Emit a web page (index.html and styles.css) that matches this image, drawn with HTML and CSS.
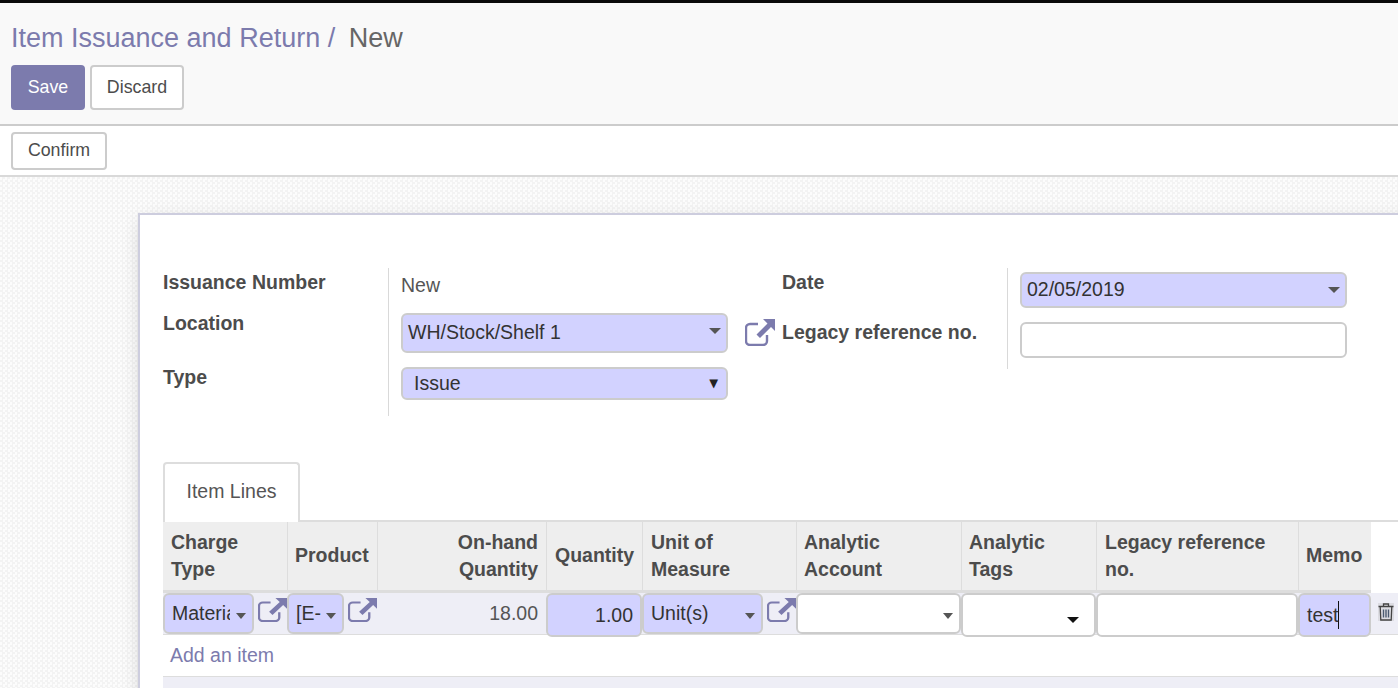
FILE: index.html
```html
<!DOCTYPE html>
<html lang="en">
<head>
<meta charset="utf-8">
<title>Item Issuance and Return</title>
<link rel="stylesheet" href="styles.css">
</head>
<body>
<svg class="defs" width="0" height="0" aria-hidden="true">
  <symbol id="ext" viewBox="0 0 30 27" preserveAspectRatio="none">
    <path d="M13 5H5A4 4 0 0 0 1 9v13a4 4 0 0 0 4 4h13a4 4 0 0 0 4-4v-6" fill="none" stroke="currentColor" stroke-width="2.400"/>
    <path d="M18 0h12v12l-4-4-11 11-3.500-3.500 11-11z" fill="currentColor"/>
  </symbol>
</svg>
<header class="control">
  <h1 class="crumbs"><span class="crumb-link">Item Issuance and Return</span><span class="crumb-sep"> / </span><span class="crumb-cur">New</span></h1>
  <div class="actions">
    <button class="btn btn-primary">Save</button>
    <button class="btn btn-plain">Discard</button>
  </div>
</header>
<div class="statusbar">
  <button class="btn btn-plain btn-confirm">Confirm</button>
</div>
<main class="bg">
  <section class="sheet">
    <div class="group">
      <div class="form-left">
        <div class="label l1">Issuance Number</div>
        <div class="val v1 plain">New</div>
        <div class="spacer"></div>
        <div class="label l2">Location</div>
        <div class="val v2"><div class="field req h40">WH/Stock/Shelf 1<i class="tri grey"></i></div></div>
        <div class="extcell"><svg class="ext big"><use href="#ext"/></svg></div>
        <div class="label l3">Type</div>
        <div class="val v3"><div class="field req h33 sel">Issue<span class="blk">▼</span></div></div>
        <div class="spacer"></div>
      </div>
      <div class="form-right">
        <div class="label r1">Date</div>
        <div class="val r2"><div class="field req h36 dt">02/05/2019<i class="tri grey"></i></div></div>
        <div class="label r3">Legacy reference no.</div>
        <div class="val r4"><div class="field h36 blank"></div></div>
      </div>
    </div>
    <div class="tabs"><div class="tab">Item Lines</div></div>
    <table class="lines">
      <colgroup>
        <col class="c1"><col class="c2"><col class="c3"><col class="c4"><col class="c5"><col class="c6"><col class="c7"><col class="c8"><col class="c9"><col class="c10">
      </colgroup>
      <thead>
        <tr>
          <th>Charge<br>Type</th>
          <th class="single">Product</th>
          <th class="num">On-hand<br>Quantity</th>
          <th class="single inset">Quantity</th>
          <th class="inset">Unit of<br>Measure</th>
          <th>Analytic<br>Account</th>
          <th>Analytic<br>Tags</th>
          <th class="inset">Legacy reference<br>no.</th>
          <th class="single">Memo</th>
          <th class="nohead"></th>
        </tr>
      </thead>
      <tbody>
        <tr class="row">
          <td><div class="cell"><div class="tf req w91"><span class="clip">Material</span><i class="tri grey"></i></div><svg class="ext"><use href="#ext"/></svg></div></td>
          <td><div class="cell"><div class="tf req w57"><span class="clip">[E-</span><i class="tri grey"></i></div><svg class="ext"><use href="#ext"/></svg></div></td>
          <td class="onhand">18.00</td>
          <td><div class="tf req tall qty">1.00</div></td>
          <td><div class="cell"><div class="tf req w121"><span class="clip">Unit(s)</span><i class="tri grey"></i></div><svg class="ext"><use href="#ext"/></svg></div></td>
          <td><div class="tf blankf"><i class="tri grey"></i></div></td>
          <td><div class="tf blankf tall tags"><i class="tri black"></i></div></td>
          <td><div class="tf blankf tall"></div></td>
          <td><div class="tf req tall memo"><span class="caret">test</span></div></td>
          <td class="del">
            <svg class="trash" viewBox="0 0 16 18"><path d="M5.500 3V1h5v2M0.500 3.500h15M2.200 3.500l.6 13.500h10.400l.6-13.500" fill="none" stroke="#444" stroke-width="1.300"/><path d="M5.500 6.500v8M8 6.500v8M10.500 6.500v8" fill="none" stroke="#4a5a70" stroke-width="1.400"/></svg>
          </td>
        </tr>
        <tr class="add"><td colspan="10"><span class="addlink">Add an item</span></td></tr>
        <tr class="foot"><td colspan="10"></td></tr>
      </tbody>
    </table>
  </section>
</main>
</body>
</html>
```
FILE: styles.css
```css
* { box-sizing: border-box; }
html, body { margin: 0; height: 688px; overflow: hidden; }
body {
  width: 1398px;
  font-family: "Liberation Sans", Arial, sans-serif;
  font-size: 19.500px;
  color: #4c4c4c;
  background: #fff;
}
.defs { position: absolute; }
.control {
  height: 126px;
  background: #f9f9f9;
  border-top: 3px solid #0a0a0a;
  border-bottom: 2px solid #ccc;
  padding: 19px 11px 0;
}
.crumbs { margin: 0; font-size: 27px; font-weight: 400; line-height: 33px; white-space: pre; }
.crumb-link { color: #7c7bad; }
.crumb-sep { color: #7c7bad; }
.crumb-cur { color: #666; margin-left: 6px; }
.actions { display: flex; gap: 5px; margin-top: 10px; }
.btn {
  font: inherit;
  font-size: 17.800px;
  border-radius: 4px;
  height: 45px;
  padding: 0;
  cursor: pointer;
}
.btn-primary { width: 74px; background: #7c7bad; color: #fff; border: 0; }
.btn-plain { width: 94px; background: #fff; color: #4c4c4c; border: 2px solid #ccc; }
.statusbar {
  height: 51px;
  background: #fff;
  border-bottom: 2px solid #d9d9d9;
  padding: 6px 11px 0;
}
.btn-confirm { width: 96px; height: 38px; padding-bottom: 2px; }
.bg {
  height: 511px;
  padding: 36px 0 0 138px;
  background-color: #f9f9f9;
  background-image: repeating-conic-gradient(#f3f3f3 0 25%, #fcfcfc 0 50%);
  background-size: 5px 5px;
}
.sheet {
  width: 1400px;
  height: 600px;
  background: #fff;
  border: 2px solid #cdcdde;
  border-right: 0;
  box-shadow: 0 5px 20px -5px rgba(0,0,0,.2);
  padding: 53px 0 0 23px;
}
.group { display: flex; height: 194px; }
.form-left {
  width: 619px;
  display: grid;
  grid-template-columns: 225px 357px 37px;
  grid-template-rows: 45px 54px 49px;
  align-items: start;
}
.form-right {
  display: grid;
  grid-template-columns: 225px 340px;
  grid-template-rows: 50px 51px;
  align-items: start;
}
.label { font-weight: 700; font-size: 19.500px; color: #4c4c4c; line-height: 22px; }
.l1 { padding-top: 3px; }
.l2 { margin-top: -1px; }
.l3 { margin-top: -1px; }
.val { height: 100%; border-left: 1px solid #d9d9d9; padding-left: 12px; }
.plain { padding-top: 6px; line-height: 22px; color: #555; }
.r1 { padding-top: 3px; }
.r3 { padding-top: 3px; }
.r2 { padding-top: 4px; }
.r4 { padding-top: 4px; }
.field {
  width: 327px;
  border: 2px solid #ccc;
  border-radius: 6px;
  position: relative;
  padding-left: 5px;
  display: flex;
  align-items: center;
  color: #333;
}
.req { background: #d2d2ff; }
.h40 { height: 40px; padding-bottom: 2px; }
.h33 { height: 33px; }
.h36 { height: 36px; padding-bottom: 2px; }
.sel { padding-left: 11px; }
.blank { background: #fff; height: 36px; }
.tri {
  position: absolute;
  width: 0; height: 0;
  border-left: 5.500px solid transparent;
  border-right: 5.500px solid transparent;
  border-top: 6px solid #555;
}
.field .tri { right: 5px; top: 13px; border-left-width: 6px; border-right-width: 6px; }
.tri.black { border-top-color: #111; }
.blk { position: absolute; right: 8px; top: 6px; font-size: 11.500px; color: #222; line-height: 16px; font-family: "DejaVu Sans", sans-serif; }
.extcell { padding: 6px 0 0 0; }
.ext { width: 29px; height: 24px; color: #7c7bad; flex: none; }
.ext.big { display: block; width: 30px; height: 27px; }
.tabs { height: 58px; }
.tab {
  width: 137px;
  height: 60px;
  border: 2px solid #ddd;
  border-bottom: 0;
  border-radius: 4px 4px 0 0;
  background: #fff;
  text-align: center;
  line-height: 55px;
  color: #555;
  position: relative;
  z-index: 1;
}
.lines {
  table-layout: fixed;
  width: 1235px;
  border-collapse: separate;
  border-spacing: 0;
  border-top: 2px solid #ddd;
}
.c1 { width: 124px; } .c2 { width: 90px; } .c3 { width: 169px; } .c4 { width: 96px; }
.c5 { width: 154px; } .c6 { width: 165px; } .c7 { width: 135px; } .c8 { width: 202px; }
.c9 { width: 73px; } .c10 { width: 27px; }
th {
  height: 71px;
  background: #eee;
  border-left: 1px solid #ddd;
  border-bottom: 3px solid #ddd;
  text-align: left;
  line-height: 27px;
  padding: 0 7px;
  color: #4c4c4c;
  font-weight: 700;
}
th:first-child { border-left: 0; padding-left: 8px; }
th.num { text-align: right; padding-right: 8px; }
th.inset { padding-left: 8px; }
th.single { padding-bottom: 2px; }
th.nohead { background: #fff; border: 0; }
td { padding: 0; }
.row td {
  height: 42px;
  background: #eeeef6;
  border-bottom: 1px solid #ddd;
  vertical-align: top;
}
.cell { display: flex; align-items: flex-start; gap: 4px; }
.cell .ext { margin-top: 5px; }
.tf {
  height: 41px;
  border: 2px solid #ccc;
  border-radius: 6px;
  position: relative;
  display: flex;
  align-items: center;
  padding-left: 7px;
  color: #333;
  background: #fff;
}
.tf.req { background: #d2d2ff; }
.tf .tri { right: 6px; top: 18px; }
.tf.w91 { width: 91px; }
.tf.w57 { width: 57px; }
.tf.w121 { width: 121px; }
.clip { display: block; overflow: hidden; white-space: nowrap; }
.w91 .clip { width: 58px; }
.w121 .clip { width: 80px; }
.w57 .clip { width: 26px; }
.tags .tri { right: 15px; top: 22px; border-left-width: 6px; border-right-width: 6px; }
.onhand { text-align: right; padding: 9px 8px 0 0; line-height: 22px; color: #555; }
.tall { height: 44px; margin-bottom: -3px; }
.qty { justify-content: flex-end; padding-right: 7px; }
.caret { border-right: 1px solid #111; line-height: 28px; }
.row .del { padding: 10px 0 0 7px; }
.trash { width: 16px; height: 18px; display: block; background: #dcdce2; }
.add td { height: 42px; padding-left: 7px; background: #fff; border-bottom: 1px solid #ddd; }
.addlink { color: #7c7bad; }
.foot td { height: 30px; background: #eeeef6; }
```
